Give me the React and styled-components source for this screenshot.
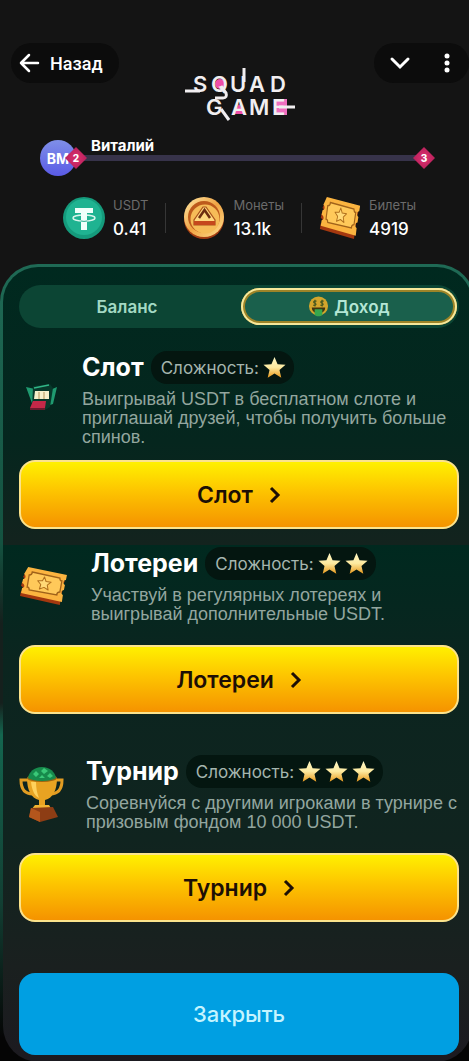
import React, { useState } from 'react';
import styled, { createGlobalStyle } from 'styled-components';

const GlobalStyle = createGlobalStyle`
  * { box-sizing: border-box; }
  body {
    margin: 0;
    background: #141414;
    color: #fff;
    font-family: Inter, "Liberation Sans", sans-serif;
  }
  button { font-family: inherit; cursor: pointer; }
  h2, p { margin: 0; }
`;

const Screen = styled.div`
  min-height: 100vh;
  padding-top: 43px;
  overflow: hidden;
  background: #141414;
`;

const Header = styled.header`
  display: grid;
  grid-template-columns: 1fr auto 1fr;
  align-items: start;
  padding-left: 11px;
`;

const BackButton = styled.button`
  display: flex;
  align-items: center;
  justify-self: start;
  gap: 10px;
  height: 40px;
  padding: 0 16px 0 8px;
  border: 0;
  border-radius: 20px;
  background: #0c0c0c;
  color: #fff;
  font-family: Roboto, sans-serif;
  font-size: 18px;
  font-weight: 500;
`;

const WindowControls = styled.div`
  display: flex;
  align-items: center;
  justify-content: space-between;
  justify-self: end;
  width: 95px;
  height: 40px;
  padding: 0 10px 0 14px;
  border-radius: 20px;
  background: #0c0c0c;
`;

const IconButton = styled.button`
  display: flex;
  padding: 0;
  border: 0;
  background: none;
  color: #fff;
`;

const Logo = styled.svg`
  display: block;
  margin-top: 22px;
`;

const Profile = styled.section`
  display: flex;
  align-items: flex-start;
  padding: 15px 45px 0 40px;
`;

const Avatar = styled.div`
  display: flex;
  align-items: center;
  justify-content: center;
  flex: none;
  width: 36px;
  height: 36px;
  margin-top: 4px;
  border-radius: 50%;
  background: linear-gradient(#7f8fe8, #5a5be6);
  font-size: 14px;
  font-weight: 700;
`;

const Level = styled.div`
  flex: 1;
`;

const Name = styled.div`
  padding-left: 15px;
  font-size: 15px;
  font-weight: 700;
  line-height: 19px;
`;

const Progress = styled.div`
  position: relative;
  height: 6px;
  background: #37334a;
`;

const LevelBadge = styled.div`
  position: absolute;
  top: -8px;
  ${({ $end }) => ($end ? 'right: -11px;' : 'left: -11px;')}
  display: grid;
  place-items: center;
  width: 22px;
  height: 22px;
  clip-path: polygon(50% 0, 100% 50%, 50% 100%, 0 50%);
  background: radial-gradient(#cf2a68 30%, #a81a50);
  font-size: 10px;
  font-weight: 800;
`;

const Stats = styled.section`
  display: flex;
  align-items: center;
  justify-content: center;
  gap: 17px;
  padding: 21px 0 25px 10px;
`;

const Stat = styled.div`
  display: flex;
  align-items: center;
  gap: 8px;

  svg { flex: none; }
`;

const StatLabel = styled.div`
  color: #6b6b6b;
  font-size: 13px;
  line-height: 14px;
`;

const StatValue = styled.div`
  padding-top: 7px;
  font-size: 17px;
  font-weight: 500;
  line-height: 20px;
`;

const Divider = styled.div`
  width: 1px;
  height: 30px;
  background: #363636;
`;

const PanelFrame = styled.main`
  margin-right: -6px;
  padding: 3px 3px 0;
  border-radius: 38px 38px 0 0;
  background: linear-gradient(#1f6a55, #145240 35%, #15201d 45%, #15201d 55%, #14664f 59%, #123f33 80%, #050505 97%);
`;

const Panel = styled.div`
  padding: 18px 13px 7px 16px;
  border-radius: 35px 35px 36px 36px;
  background: linear-gradient(
    #00291f,
    #05261e 22%,
    #13231e 35%,
    #00291f 35%,
    #0b251f 50%,
    #10241f 72%,
    #1a201f 88%,
    #1c1a20
  );
`;

const Tabs = styled.div`
  display: flex;
  align-items: center;
  gap: 6px;
  height: 43px;
  padding-right: 2px;
  border-radius: 22px;
  background: #0c4534;
`;

const Tab = styled.button`
  display: flex;
  align-items: center;
  justify-content: center;
  gap: 5px;
  flex: 1;
  height: 37px;
  padding: 0;
  border: 0;
  border-radius: 19px;
  background: ${({ $active }) => ($active ? '#1a604c' : 'transparent')};
  box-shadow: ${({ $active }) =>
    $active ? 'inset 0 0 0 2px #f7e89a, inset 0 0 0 4px #9d8428' : 'none'};
  color: ${({ $active }) => ($active ? '#b4e6d5' : '#a3d9c4')};
  font-size: 17px;
  font-weight: 600;
`;

const Task = styled.section`
  padding-top: ${({ $top }) => $top}px;
`;

const TaskInfo = styled.div`
  display: grid;
  grid-template-columns: ${({ $iconCol }) => $iconCol}px 1fr;
  align-items: center;
`;

const TaskHead = styled.div`
  display: flex;
  align-items: center;
  gap: 7px;
`;

const TaskTitle = styled.h2`
  font-size: 25px;
  font-weight: 700;
  line-height: 33px;
`;

const Difficulty = styled.div`
  display: flex;
  align-items: center;
  gap: 4px;
  height: 33px;
  padding: 0 8px 0 10px;
  border-radius: 16px;
  background: #041610;
  color: #a5b5ae;
  font-size: 17px;
  white-space: nowrap;
`;

const Description = styled.p`
  padding-top: 6px;
  color: #93a69f;
  font-family: "Liberation Sans", Arial, sans-serif;
  font-size: 18px;
  line-height: 19px;
`;

const GoldButton = styled.button`
  display: flex;
  align-items: center;
  justify-content: center;
  gap: 16px;
  width: 100%;
  height: 69px;
  margin-top: ${({ $gap }) => $gap}px;
  border: 2px solid #fbe38c;
  border-radius: 16px;
  background: linear-gradient(#fff000, #fdc400 45%, #f59300);
  color: #1d0f05;
  font-size: 23px;
  font-weight: 600;
`;

const CloseButton = styled.button`
  width: 100%;
  height: 82px;
  margin-top: 51px;
  border: 0;
  border-radius: 16px;
  background: #009fe2;
  color: #c4f4ff;
  font-size: 22px;
  font-weight: 500;
`;

const SquadLogo = () => (
  <Logo width="110" height="56" viewBox="0 0 110 56" role="img" aria-label="Squad Game">
    <circle cx="35" cy="19" r="5" fill="#ef4fa8" />
    <path d="M48 49l6-10 6 10z" fill="#ef4fa8" />
    <path d="M89 34h13v16H89z" fill="#ef6ec0" />
    <g fill="#f1eef0" fontFamily="Inter, sans-serif" fontWeight="600" fontSize="22">
      <text x="8 26 45 64 85" y="27">SQUAD</text>
      <text x="21 46 64 87" y="50">GAME</text>
    </g>
    <g fill="none" stroke="#f1eef0" strokeWidth="3">
      <path d="M0 26h15" />
      <path d="M59 3v14" />
      <path d="M36 21l5 7c1 3 0 5-3 5h-8" />
      <path d="M36 44l8 11" />
      <path d="M94 42h16" />
    </g>
  </Logo>
);

const Tether = () => (
  <svg width="42" height="42" viewBox="0 0 42 42">
    <circle cx="21" cy="21" r="21" fill="#159b7c" />
    <circle cx="21" cy="20" r="18" fill="#1fb391" />
    <ellipse cx="21" cy="21" rx="11" ry="3" fill="none" stroke="#d9f5ec" strokeWidth="1.500" />
    <path d="M12 11h18v5h-6v17h-6V16h-6z" fill="#f0fffa" />
    <path d="M18 24c2 .5 4 .5 6 0" stroke="#1fa98a" strokeWidth="1" fill="none" />
  </svg>
);

const Coin = () => (
  <svg width="42" height="42" viewBox="0 0 42 42">
    <defs>
      <linearGradient id="coin" x1="0" y1="0" x2="1" y2="1">
        <stop offset="0" stopColor="#ffe9a6" />
        <stop offset=".5" stopColor="#f0a444" />
        <stop offset="1" stopColor="#ffdf8e" />
      </linearGradient>
    </defs>
    <circle cx="21" cy="22" r="20" fill="#a33c12" />
    <circle cx="21" cy="20" r="20" fill="url(#coin)" />
    <circle cx="21" cy="20" r="16" fill="#bd5a1c" />
    <circle cx="22" cy="22" r="14.500" fill="#f6bc58" />
    <path d="M20 10h3l9 13v5H11v-5z" fill="#ffd77e" stroke="#a8501b" strokeWidth="1.200" />
    <path d="M16 21l5.500-8 5.500 8" fill="none" stroke="#6e2d10" strokeWidth="2.500" />
    <path d="M11 24h21v4H11z" fill="#c5481c" />
  </svg>
);

const Ticket = ({ width, height }) => (
  <svg width={width} height={height} viewBox="0 0 48 38" preserveAspectRatio="none">
    <path
      d="M6 6l39 8-1 2c-3 0-3 4-1 5l-1 5c-3 0-3 4-1 5l-1 7-39-9 1-5c3 0 3-4 0-5l1-4c3 0 3-4 1-5z"
      fill="#a4380f"
    />
    <path
      d="M9 0l38 8-1 5c-3 0-3 4-1 5l-1 5c-3 0-3 4-1 5l-1 7-40-9 1-5c3 0 3-4 0-5l1-4c3 0 3-4 1-5z"
      fill="#fbb440"
    />
    <path
      d="M13 5l27 6c0 2 1 3 2 3l-2 11c-2 0-3 1-3 3L10 23c0-2-1-3-2-3l2-12c2 0 3-1 3-3z"
      fill="#ffc95a"
      stroke="#a0621a"
      strokeWidth="1.300"
    />
    <path
      d="M25 10l1.500 4.500 5 .7-3.800 3 .8 4.800-4-2.600-4.500 1.600 1.300-4.500-3-3.700h4.700z"
      fill="#ffd977"
      stroke="#b06f1c"
      strokeWidth="1"
      strokeLinejoin="round"
    />
  </svg>
);

const SlotIcon = () => (
  <svg width="40" height="32" viewBox="-7 0 40 32">
    <path d="M0 4l9 2-2 17zM31 4l-7 3v15l3-1z" fill="#1f9a70" />
    <path d="M7 3l17-2 3 4-3 19-5 3H6z" fill="#07382a" />
    <path d="M8 5l15-3" stroke="#31b587" strokeWidth="1.500" />
    <path d="M9 8h14v8H8z" fill="#f4efca" />
    <path d="M13 9v7M18 9v7" stroke="#b3945a" strokeWidth="1" />
    <path d="M7 18h13l-1 7H4z" fill="#c42848" />
    <path d="M4 25h15v2H4z" fill="#681a2c" />
  </svg>
);

const Trophy = () => (
  <svg width="46" height="56" viewBox="0 0 46 56">
    <path
      d="M9 14H2c0 9 4 14 12 14M36 14h7c0 9-4 14-12 14"
      fill="none"
      stroke="#e29c22"
      strokeWidth="3"
    />
    <path d="M8 12h30c0 12-4 20-12 22v6h-6v-6C12 32 8 24 8 12z" fill="#e8a322" />
    <path d="M12 16c1 9 4 14 8 16-2-5-3-10-3-16z" fill="#ffd15c" />
    <ellipse cx="23" cy="12" rx="15" ry="4" fill="#9c6410" />
    <path d="M9 12C10 6 15 1 23 1s13 5 14 11c-6 4-22 4-28 0z" fill="#178a4c" />
    <path d="M14 8l3-3 3 3-3 3zM22 5l3-3 4 3-4 3zM28 10l3-3 3 3-3 2zM20 12l3-3 3 3z" fill="#3ac878" />
    <path d="M16 39h14l3 5H12z" fill="#f0b332" />
    <path d="M12 42l22-1 5 10-18 5-11-5z" fill="#8d3d14" />
    <path d="M12 42l9 4v10l-11-5z" fill="#b4561c" />
  </svg>
);

const Star = () => (
  <svg width="23" height="23" viewBox="0 0 24 24">
    <defs>
      <linearGradient id="star" x1="0" y1="0" x2="0" y2="1">
        <stop offset="0" stopColor="#fff7c4" />
        <stop offset=".5" stopColor="#fdeaa0" />
        <stop offset="1" stopColor="#e99a1c" />
      </linearGradient>
    </defs>
    <path d="M12 1l3.200 7.500 8.300.7-6.300 5.400 1.900 8L12 18.300l-7.100 4.300 1.900-8L.5 9.200l8.300-.7z" fill="url(#star)" />
  </svg>
);

const MoneyFace = () => (
  <svg width="21" height="21" viewBox="0 0 22 22">
    <circle cx="11" cy="10.500" r="10" fill="#d3a52c" />
    <path d="M4 12h14c0 4-3 6-7 6s-7-2-7-6z" fill="#3f3510" />
    <path d="M7 14h8v5c0 3-8 3-8 0z" fill="#37a84d" />
    <g fill="none" stroke="#4b5a20" strokeWidth="1.300">
      <path d="M9 5.500c-3-1-4 1.500-2 2s2 3-1.500 2M7.300 4v7M16.500 5.500c-3-1-4 1.500-2 2s2 3-1.500 2M14.800 4v7" />
    </g>
  </svg>
);

const Chevron = () => (
  <svg width="12" height="18" viewBox="0 0 12 18" fill="none" stroke="currentColor" strokeWidth="3">
    <path d="M2 2l7 7-7 7" />
  </svg>
);

const tasks = [
  {
    title: 'Слот',
    stars: 1,
    text: 'Выигрывай USDT в бесплатном слоте и приглашай друзей, чтобы получить больше спинов.',
    icon: <SlotIcon />,
    iconCol: 63,
    top: 23,
    gap: 13,
  },
  {
    title: 'Лотереи',
    stars: 2,
    text: 'Участвуй в регулярных лотереях и выигрывай дополнительные USDT.',
    icon: <Ticket width={49} height={38} />,
    iconCol: 72,
    top: 18,
    gap: 21,
  },
  {
    title: 'Турнир',
    stars: 3,
    text: 'Соревнуйся с другими игроками в турнире с призовым фондом 10 000 USDT.',
    icon: <Trophy />,
    iconCol: 67,
    top: 41,
    gap: 21,
  },
];

const stats = [
  { label: 'USDT', value: '0.41', icon: <Tether /> },
  { label: 'Монеты', value: '13.1k', icon: <Coin /> },
  { label: 'Билеты', value: '4919', icon: <Ticket width={42} height={42} /> },
];

const App = () => {
  const [tab, setTab] = useState('income');

  return (
    <>
      <GlobalStyle />
      <Screen>
        <Header>
          <BackButton type="button">
            <svg width="21" height="20" viewBox="0 0 21 20" fill="none" stroke="#fff" strokeWidth="2.500" strokeLinecap="round" strokeLinejoin="round">
              <path d="M19 10H2M10 2l-8 8 8 8" />
            </svg>
            Назад
          </BackButton>
          <SquadLogo />
          <WindowControls>
            <IconButton type="button" aria-label="Свернуть">
              <svg width="24" height="16" viewBox="0 0 24 16" fill="none" stroke="currentColor" strokeWidth="3" strokeLinecap="round">
                <path d="M4 4l8 8 8-8" />
              </svg>
            </IconButton>
            <IconButton type="button" aria-label="Меню">
              <svg width="24" height="20" viewBox="0 0 24 20" fill="currentColor">
                <circle cx="12" cy="3" r="2.500" />
                <circle cx="12" cy="10" r="2.500" />
                <circle cx="12" cy="17" r="2.500" />
              </svg>
            </IconButton>
          </WindowControls>
        </Header>

        <Profile>
          <Avatar>ВМ</Avatar>
          <Level>
            <Name>Виталий</Name>
            <Progress>
              <LevelBadge>2</LevelBadge>
              <LevelBadge $end>3</LevelBadge>
            </Progress>
          </Level>
        </Profile>

        <Stats>
          {stats.map((s, i) => (
            <React.Fragment key={s.label}>
              {i > 0 && <Divider />}
              <Stat>
                {s.icon}
                <div>
                  <StatLabel>{s.label}</StatLabel>
                  <StatValue>{s.value}</StatValue>
                </div>
              </Stat>
            </React.Fragment>
          ))}
        </Stats>

        <PanelFrame>
          <Panel>
            <Tabs role="tablist">
              <Tab type="button" role="tab" aria-selected={tab === 'balance'} $active={tab === 'balance'} onClick={() => setTab('balance')}>
                Баланс
              </Tab>
              <Tab type="button" role="tab" aria-selected={tab === 'income'} $active={tab === 'income'} onClick={() => setTab('income')}>
                <MoneyFace />
                Доход
              </Tab>
            </Tabs>

            {tasks.map((task) => (
              <Task key={task.title} $top={task.top}>
                <TaskInfo $iconCol={task.iconCol}>
                  {task.icon}
                  <div>
                    <TaskHead>
                      <TaskTitle>{task.title}</TaskTitle>
                      <Difficulty>
                        Сложность:
                        {Array.from({ length: task.stars }, (_, i) => (
                          <Star key={i} />
                        ))}
                      </Difficulty>
                    </TaskHead>
                    <Description>{task.text}</Description>
                  </div>
                </TaskInfo>
                <GoldButton type="button" $gap={task.gap}>
                  {task.title}
                  <Chevron />
                </GoldButton>
              </Task>
            ))}

            <CloseButton type="button">Закрыть</CloseButton>
          </Panel>
        </PanelFrame>
      </Screen>
    </>
  );
};

export default App;
